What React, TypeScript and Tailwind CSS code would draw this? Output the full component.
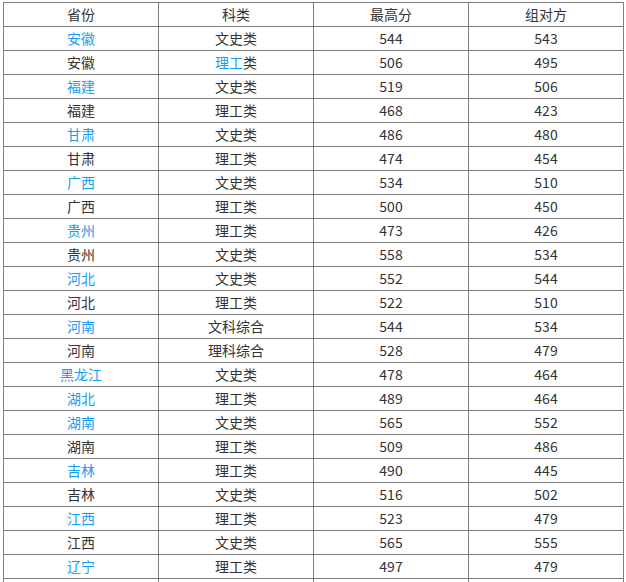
import React from "react";

type Row = { p: string; pb: boolean; k: string; kb?: boolean; a: string; b: string };

const rows: Row[] = [
  { p: "安徽", pb: true, k: "文史类", a: "544", b: "543" },
  { p: "安徽", pb: false, k: "理工类", kb: true, a: "506", b: "495" },
  { p: "福建", pb: true, k: "文史类", a: "519", b: "506" },
  { p: "福建", pb: false, k: "理工类", a: "468", b: "423" },
  { p: "甘肃", pb: true, k: "文史类", a: "486", b: "480" },
  { p: "甘肃", pb: false, k: "理工类", a: "474", b: "454" },
  { p: "广西", pb: true, k: "文史类", a: "534", b: "510" },
  { p: "广西", pb: false, k: "理工类", a: "500", b: "450" },
  { p: "贵州", pb: true, k: "理工类", a: "473", b: "426" },
  { p: "贵州", pb: false, k: "文史类", a: "558", b: "534" },
  { p: "河北", pb: true, k: "文史类", a: "552", b: "544" },
  { p: "河北", pb: false, k: "理工类", a: "522", b: "510" },
  { p: "河南", pb: true, k: "文科综合", a: "544", b: "534" },
  { p: "河南", pb: false, k: "理科综合", a: "528", b: "479" },
  { p: "黑龙江", pb: true, k: "文史类", a: "478", b: "464" },
  { p: "湖北", pb: true, k: "理工类", a: "489", b: "464" },
  { p: "湖南", pb: true, k: "文史类", a: "565", b: "552" },
  { p: "湖南", pb: false, k: "理工类", a: "509", b: "486" },
  { p: "吉林", pb: true, k: "理工类", a: "490", b: "445" },
  { p: "吉林", pb: false, k: "文史类", a: "516", b: "502" },
  { p: "江西", pb: true, k: "理工类", a: "523", b: "479" },
  { p: "江西", pb: false, k: "文史类", a: "565", b: "555" },
  { p: "辽宁", pb: true, k: "理工类", a: "497", b: "479" },
];

const cell = "border border-[#808080] h-[23px] p-0 text-center align-middle leading-[23px]";

export default function App() {
  return (
    <div
      className="bg-white w-[626px] min-h-[582px] pt-[2px] pl-[3px] text-[14px] text-[#333]"
      style={{ fontFamily: '"Noto Sans CJK SC", "Noto Sans", sans-serif' }}
    >
      <table className="w-[620px] table-fixed border-collapse border border-[#222]">
        <colgroup>
          <col className="w-[155px]" />
          <col className="w-[155px]" />
          <col className="w-[155px]" />
          <col className="w-[155px]" />
        </colgroup>
        <tbody>
          <tr>
            <td className={cell}>省份</td>
            <td className={cell}>科类</td>
            <td className={cell}>最高分</td>
            <td className={cell}>组对方</td>
          </tr>
          {rows.map((r, i) => (
            <tr key={i}>
              <td className={cell}>
                <span className={r.pb ? "text-[#1a9cf0]" : ""}>{r.p}</span>
              </td>
              <td className={cell}>
                {r.kb ? (
                  <>
                    <span className="text-[#1a9cf0]">{r.k.slice(0, 2)}</span>
                    {r.k.slice(2)}
                  </>
                ) : (
                  r.k
                )}
              </td>
              <td className={cell}>{r.a}</td>
              <td className={cell}>{r.b}</td>
            </tr>
          ))}
          <tr>
            <td className={cell}>&nbsp;</td>
            <td className={cell}>&nbsp;</td>
            <td className={cell}>&nbsp;</td>
            <td className={cell}>&nbsp;</td>
          </tr>
        </tbody>
      </table>
    </div>
  );
}
